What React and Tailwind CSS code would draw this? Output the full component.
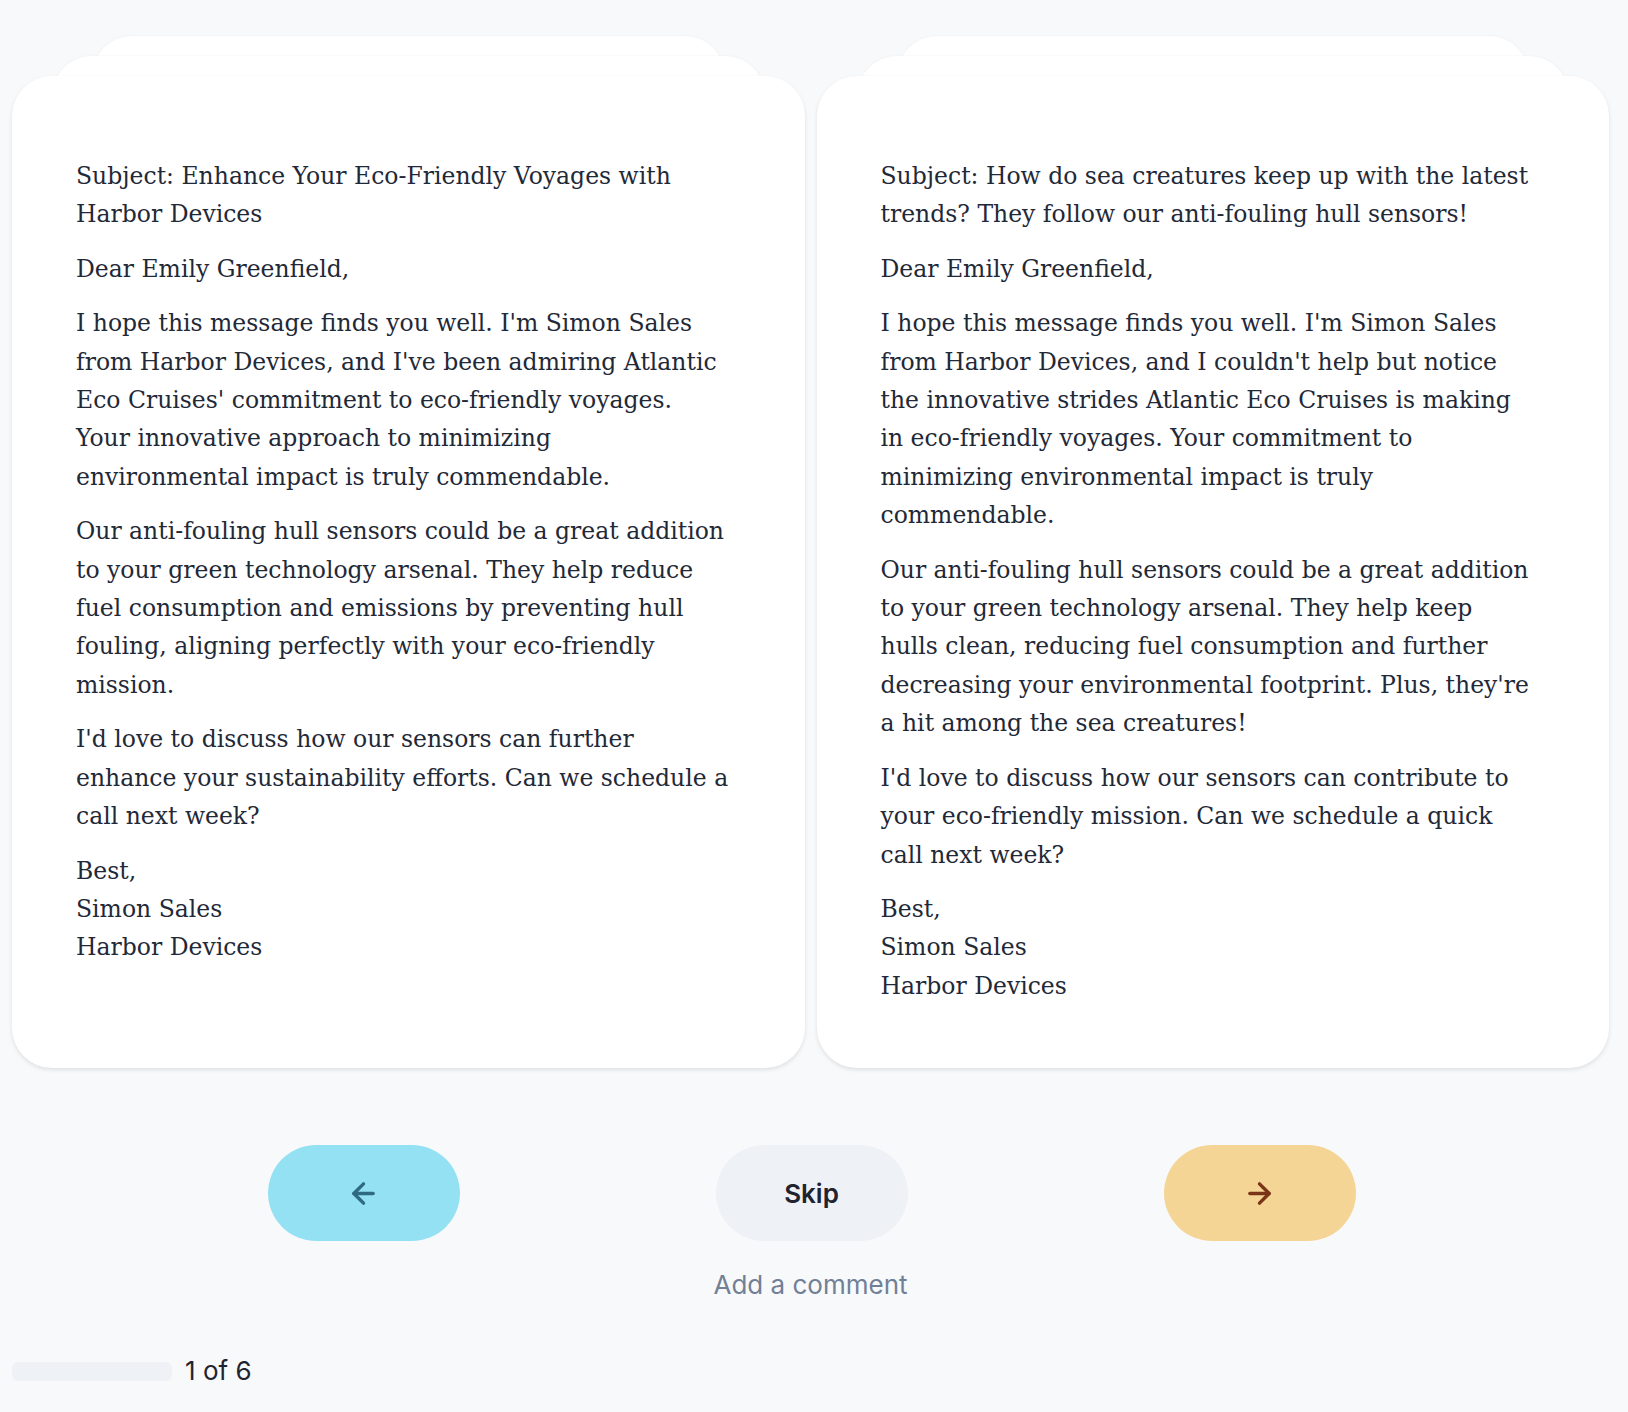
import React from 'react'
import { ArrowLeft, ArrowRight } from 'lucide-react'

const left = [
  ['Subject: Enhance Your Eco-Friendly Voyages with', 'Harbor Devices'],
  ['Dear Emily Greenfield,'],
  [
    "I hope this message finds you well. I'm Simon Sales",
    "from Harbor Devices, and I've been admiring Atlantic",
    "Eco Cruises' commitment to eco-friendly voyages.",
    'Your innovative approach to minimizing',
    'environmental impact is truly commendable.',
  ],
  [
    'Our anti-fouling hull sensors could be a great addition',
    'to your green technology arsenal. They help reduce',
    'fuel consumption and emissions by preventing hull',
    'fouling, aligning perfectly with your eco-friendly',
    'mission.',
  ],
  [
    "I'd love to discuss how our sensors can further",
    'enhance your sustainability efforts. Can we schedule a',
    'call next week?',
  ],
  ['Best,', 'Simon Sales', 'Harbor Devices'],
]

const right = [
  ['Subject: How do sea creatures keep up with the latest', 'trends? They follow our anti-fouling hull sensors!'],
  ['Dear Emily Greenfield,'],
  [
    "I hope this message finds you well. I'm Simon Sales",
    "from Harbor Devices, and I couldn't help but notice",
    'the innovative strides Atlantic Eco Cruises is making',
    'in eco-friendly voyages. Your commitment to',
    'minimizing environmental impact is truly',
    'commendable.',
  ],
  [
    'Our anti-fouling hull sensors could be a great addition',
    'to your green technology arsenal. They help keep',
    'hulls clean, reducing fuel consumption and further',
    "decreasing your environmental footprint. Plus, they're",
    'a hit among the sea creatures!',
  ],
  [
    "I'd love to discuss how our sensors can contribute to",
    'your eco-friendly mission. Can we schedule a quick',
    'call next week?',
  ],
  ['Best,', 'Simon Sales', 'Harbor Devices'],
]

function EmailCard({ paragraphs }) {
  return (
    <div className="relative">
      {/* stacked cards behind */}
      <div className="absolute -top-10 left-20 right-20 h-32 rounded-[40px] bg-white shadow-[0_0_3px_rgba(0,0,0,0.05)]" />
      <div className="absolute -top-5 left-10 right-10 h-32 rounded-[40px] bg-white shadow-[0_0_3px_rgba(0,0,0,0.05)]" />
      <div className="relative h-full rounded-[40px] bg-white shadow-[0_2px_4px_rgba(0,0,0,0.1)] pl-16 pr-10 pt-[81px] pb-[63px] font-['DejaVu_Serif',serif] text-[23.5px] leading-[38.4px] text-[#1f2937]">
        {paragraphs.map((lines, i) => (
          <p key={i} className="mb-4 last:mb-0 whitespace-nowrap">
            {lines.map((line, j) => (
              <span key={j} className="block">{line}</span>
            ))}
          </p>
        ))}
      </div>
    </div>
  )
}

export default function App() {
  return (
    <div className="min-h-screen bg-[#f8f9fb] pl-3 pr-[19px] pt-[76px] pb-8 font-['Inter',sans-serif]">
      <div className="grid grid-cols-2 gap-3">
        <EmailCard paragraphs={left} />
        <EmailCard paragraphs={right} />
      </div>

      <div className="mt-[77px] flex justify-center gap-[256px] pl-0.5">
        <button className="flex h-24 w-48 items-center justify-center rounded-full bg-[#95e1f4] text-[#2e6a80]">
          <ArrowLeft size={33} strokeWidth={2.5} />
        </button>
        <button className="flex h-24 w-48 items-center justify-center rounded-full bg-[#eef1f5] text-[26px] font-semibold text-[#1f2430]">
          Skip
        </button>
        <button className="flex h-24 w-48 items-center justify-center rounded-full bg-[#f4d595] text-[#7a3418]">
          <ArrowRight size={33} strokeWidth={2.5} />
        </button>
      </div>

      <div className="mt-[28px] text-center text-[26px] leading-8 text-[#718096]">Add a comment</div>

      <div className="mt-[54px] flex items-center gap-[13px]">
        <div className="h-[19px] w-40 rounded-md bg-[#eef1f5]" />
        <span className="text-[26px] leading-8 text-[#1f2430]">1 of 6</span>
      </div>
    </div>
  )
}
